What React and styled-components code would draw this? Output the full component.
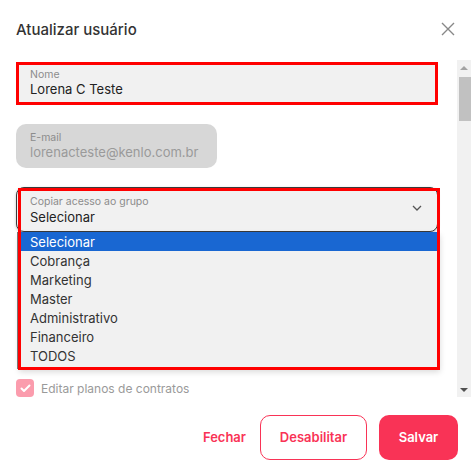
import React from "react";
import styled, { createGlobalStyle } from "styled-components";

const GlobalStyle = createGlobalStyle`
  html, body {
    margin: 0;
    padding: 0;
    background: #fff;
    font-family: Inter, "Noto Sans", sans-serif;
  }
`;

const BRAND = "#f93356";

const Modal = styled.div`
  width: 471px;
  height: 472px;
  display: flex;
  flex-direction: column;
  background: #fff;
  overflow: hidden;
`;

const Header = styled.div`
  height: 58px;
  padding: 0 16px 2px 16px;
  display: flex;
  align-items: center;
  justify-content: space-between;
`;

const Title = styled.h2`
  margin: 0;
  font-size: 15px;
  font-weight: 500;
  color: #333;
`;

const CloseButton = styled.button`
  border: none;
  background: none;
  padding: 0;
  width: 14px;
  height: 14px;
  display: flex;
  cursor: pointer;
`;

const Body = styled.div`
  height: 337px;
  display: flex;
`;

const Content = styled.div`
  flex: 1;
  padding: 2px 19px 0 16px;
  display: flex;
  flex-direction: column;
  overflow: hidden;
`;

const Field = styled.div`
  box-sizing: border-box;
  width: ${(p) => p.$width || "100%"};
  height: ${(p) => p.$height || "45px"};
  margin-top: ${(p) => p.$mt || "0"};
  padding: ${(p) => (p.$highlight ? "3px 11px" : "7px 14px")};
  background: ${(p) => (p.$disabled ? "#d7d7d7" : "#f1f1f1")};
  border: ${(p) => (p.$highlight ? "3px solid #ff0000" : "none")};
  border-radius: ${(p) => (p.$highlight ? "0" : "10px")};
  display: flex;
  flex-direction: column;
`;

const Label = styled.span`
  font-size: 10.5px;
  line-height: 13px;
  color: #8c8c8c;
  white-space: nowrap;
`;

const Value = styled.span`
  font-size: 13px;
  line-height: 17px;
  color: ${(p) => (p.$muted ? "#9a9a9a" : "#222")};
  white-space: nowrap;
`;

const SelectGroup = styled.div`
  position: relative;
  margin-top: 19px;
  width: 422px;
`;

const SelectBox = styled.div`
  box-sizing: border-box;
  height: 45px;
  padding: 7px 13px 0 13px;
  border: 1px solid #3a3a3a;
  border-radius: 8px;
  background: #f1f1f1;
  box-shadow: 0 1px 3px rgba(0, 0, 0, 0.25);
  display: flex;
  align-items: flex-start;
  justify-content: space-between;
`;

const SelectText = styled.div`
  display: flex;
  flex-direction: column;
  ${Value} {
    line-height: 19px;
  }
`;

const Chevron = styled.span`
  margin-top: 10px;
  margin-right: 2px;
  display: flex;
`;

const OptionList = styled.ul`
  list-style: none;
  margin: 0 0 0 1px;
  padding: 0 0 4px 0;
  background: #f1f1f1;
  border-left: 1px solid #777;
  box-shadow: 2px 3px 6px rgba(0, 0, 0, 0.15);
`;

const Option = styled.li`
  height: 19px;
  line-height: 21px;
  overflow: hidden;
  padding-left: 12px;
  font-size: 13px;
  color: ${(p) => (p.$selected ? "#fff" : "#333")};
  background: ${(p) => (p.$selected ? "#1967d2" : "transparent")};
`;

const RedFrame = styled.div`
  position: absolute;
  top: 1px;
  left: 2px;
  right: -2px;
  bottom: -1px;
  border: 3px solid #ff0000;
  pointer-events: none;
`;

const CheckRow = styled.label`
  margin-top: 10px;
  display: flex;
  align-items: center;
  gap: 7px;
  font-size: 12px;
  color: #9a9a9a;
`;

const CheckBox = styled.span`
  width: 18px;
  height: 18px;
  border-radius: 4px;
  background: #fb9cad;
  display: flex;
  align-items: center;
  justify-content: center;
`;

const Scrollbar = styled.div`
  width: 14px;
  background: #f1f1f1;
  display: flex;
  flex-direction: column;
`;

const Arrow = styled.div`
  height: 15px;
  display: flex;
  align-items: center;
  justify-content: center;
  &::after {
    content: "";
    border-left: 4px solid transparent;
    border-right: 4px solid transparent;
    ${(p) =>
      p.$down
        ? "border-top: 4px solid #505050;"
        : "border-bottom: 4px solid #a3a3a3;"}
  }
`;

const Thumb = styled.div`
  margin: 2px 0 0 2px;
  height: 44px;
  background: #c1c1c1;
`;

const Track = styled.div`
  flex: 1;
`;

const Footer = styled.div`
  flex: 1;
  display: flex;
  align-items: center;
  justify-content: flex-end;
  gap: 12px;
  padding: 5px 13px 0 0;
`;

const Button = styled.button`
  box-sizing: border-box;
  height: 45px;
  padding: 0 ${(p) => (p.$variant === "text" ? "2px" : "16px")};
  border-radius: 10px;
  font-family: Inter, sans-serif;
  font-size: 13px;
  font-weight: 600;
  cursor: pointer;
  border: ${(p) => (p.$variant === "outline" ? `1px solid ${BRAND}` : "none")};
  background: ${(p) => (p.$variant === "solid" ? BRAND : "transparent")};
  color: ${(p) => (p.$variant === "solid" ? "#fff" : BRAND)};
  width: ${(p) => p.$width || "auto"};
`;

const options = [
  "Selecionar",
  "Cobrança",
  "Marketing",
  "Master",
  "Administrativo",
  "Financeiro",
  "TODOS",
];

export default function App() {
  return (
    <Modal>
      <GlobalStyle />
      <Header>
        <Title>Atualizar usuário</Title>
        <CloseButton aria-label="Fechar">
          <svg width="14" height="14" viewBox="0 0 14 14">
            <path d="M1 1L13 13M13 1L1 13" stroke="#888" strokeWidth="1.4" />
          </svg>
        </CloseButton>
      </Header>

      <Body>
        <Content>
          <Field $highlight $height="43px">
            <Label>Nome</Label>
            <Value>Lorena C Teste</Value>
          </Field>

          <Field $disabled $width="201px" $mt="19px">
            <Label>E-mail</Label>
            <Value $muted>lorenacteste@kenlo.com.br</Value>
          </Field>

          <SelectGroup>
            <SelectBox>
              <SelectText>
                <Label>Copiar acesso ao grupo</Label>
                <Value>Selecionar</Value>
              </SelectText>
              <Chevron>
                <svg width="10" height="6" viewBox="0 0 10 6">
                  <path d="M1 1L5 5L9 1" fill="none" stroke="#555" strokeWidth="1.3" />
                </svg>
              </Chevron>
            </SelectBox>
            <OptionList>
              {options.map((o, i) => (
                <Option key={o} $selected={i === 0}>
                  {o}
                </Option>
              ))}
            </OptionList>
            <RedFrame />
          </SelectGroup>

          <CheckRow>
            <CheckBox>
              <svg width="11" height="9" viewBox="0 0 11 9">
                <path d="M1.5 4.5L4 7L9.5 1.5" fill="none" stroke="#fff" strokeWidth="2" strokeLinecap="round" strokeLinejoin="round" />
              </svg>
            </CheckBox>
            Editar planos de contratos
          </CheckRow>
        </Content>

        <Scrollbar>
          <Arrow />
          <Thumb />
          <Track />
          <Arrow $down />
        </Scrollbar>
      </Body>

      <Footer>
        <Button $variant="text">Fechar</Button>
        <Button $variant="outline" $width="107px">Desabilitar</Button>
        <Button $variant="solid" $width="79px">Salvar</Button>
      </Footer>
    </Modal>
  );
}
